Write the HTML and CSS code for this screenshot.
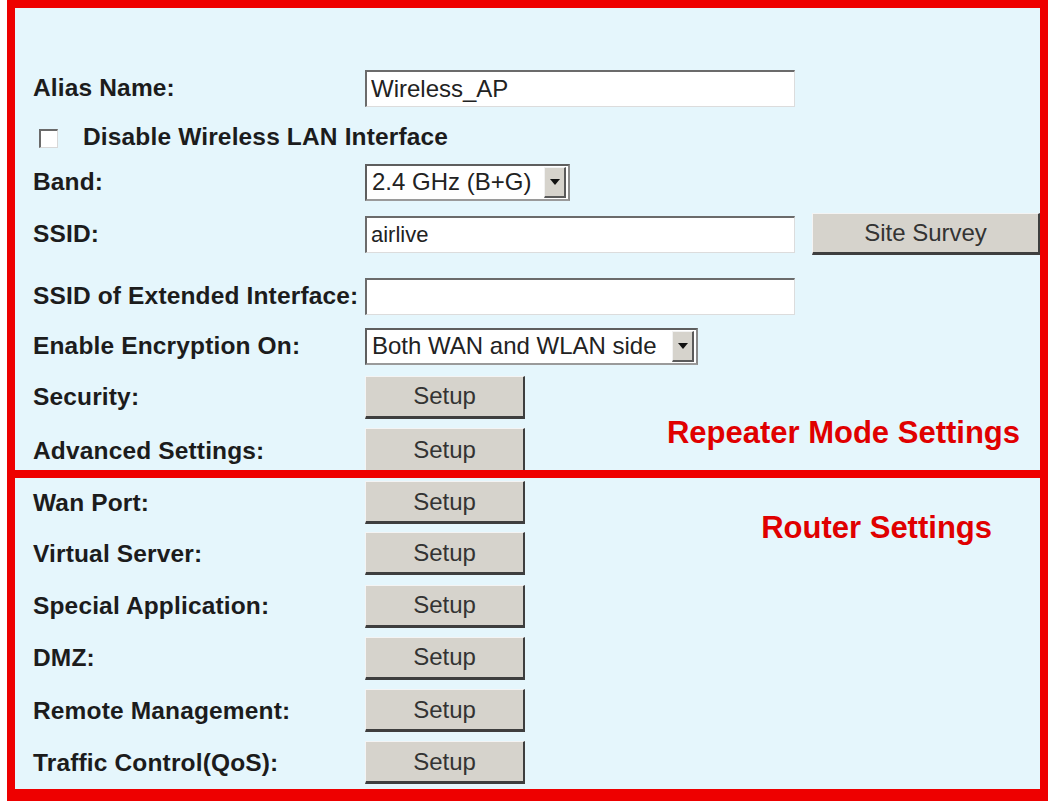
FILE: index.html
```html
<!DOCTYPE html>
<html>
<head>
<meta charset="utf-8">
<link rel="stylesheet" href="styles.css">
</head>
<body>
<div class="panel">
  <div class="box box-repeater">
    <div class="row row-alias">
      <span class="label">Alias Name:</span>
      <input class="field" type="text" value="Wireless_AP">
    </div>
    <div class="row row-check">
      <span class="checkbox"></span>
      <span class="label label-check">Disable Wireless LAN Interface</span>
    </div>
    <div class="row row-band">
      <span class="label">Band:</span>
      <div class="select select-band"><span class="select-text">2.4 GHz (B+G)</span><span class="arrow"><span class="tri"></span></span></div>
    </div>
    <div class="row row-ssid">
      <span class="label">SSID:</span>
      <input class="field field-small" type="text" value="airlive">
      <button class="btn btn-survey">Site Survey</button>
    </div>
    <div class="row row-ext">
      <span class="label">SSID of Extended Interface:</span>
      <input class="field" type="text" value="">
    </div>
    <div class="row row-enc">
      <span class="label">Enable Encryption On:</span>
      <div class="select select-enc"><span class="select-text">Both WAN and WLAN side</span><span class="arrow"><span class="tri"></span></span></div>
    </div>
    <div class="row row-sec">
      <span class="label">Security:</span>
      <button class="btn">Setup</button>
    </div>
    <div class="row row-adv">
      <span class="label">Advanced Settings:</span>
      <button class="btn">Setup</button>
    </div>
    <div class="note note-repeater">Repeater Mode Settings</div>
  </div>
  <div class="box box-router">
    <div class="row row-first">
      <span class="label">Wan Port:</span>
      <button class="btn">Setup</button>
    </div>
    <div class="row row-std">
      <span class="label">Virtual Server:</span>
      <button class="btn">Setup</button>
    </div>
    <div class="row row-std">
      <span class="label">Special Application:</span>
      <button class="btn">Setup</button>
    </div>
    <div class="row row-std">
      <span class="label">DMZ:</span>
      <button class="btn">Setup</button>
    </div>
    <div class="row row-std">
      <span class="label">Remote Management:</span>
      <button class="btn">Setup</button>
    </div>
    <div class="row row-std">
      <span class="label">Traffic Control(QoS):</span>
      <button class="btn">Setup</button>
    </div>
    <div class="note note-router">Router Settings</div>
  </div>
</div>
</body>
</html>
```

FILE: styles.css
```css
* { box-sizing: border-box; }

body {
  margin: 0;
  background: #ffffff;
  font-family: "Liberation Sans", Arial, sans-serif;
  color: #1c1c1c;
}

.panel {
  width: 1041px;
  margin-left: 7px;
}

.box {
  position: relative;
  background: #e5f6fc;
  border: 8px solid #ee0000;
}

.box-repeater {
  padding-top: 56px;
}

.box-router {
  border-top: 0;
  border-bottom-width: 12px;
}

.row {
  display: flex;
  align-items: center;
  padding-left: 18px;
}

.row-alias { height: 48px; }
.row-check { height: 50px; padding-left: 24px; }
.row-band { height: 40px; }
.row-ssid { height: 64px; }
.row-ext { height: 60px; }
.row-enc { height: 40px; }
.row-sec { height: 62px; }
.row-adv { height: 42px; align-items: flex-start; }
.row-adv .label { margin-top: 9px; }
.row-first { height: 49.9px; }
.row-std { height: 52.2px; }

.label {
  width: 332px;
  flex: none;
  font-weight: bold;
  font-size: 24.5px;
  letter-spacing: 0.15px;
  white-space: nowrap;
  color: #1c1c1c;
}

.label-check {
  width: auto;
  margin-left: 25px;
}

.checkbox {
  width: 19px;
  height: 19px;
  flex: none;
  background: #ffffff;
  border-style: solid;
  border-width: 2px 1px 1px 2px;
  border-color: #6a6a6a #d8d8d8 #d8d8d8 #6a6a6a;
  margin-top: 2px;
}

.field {
  width: 430px;
  height: 37px;
  flex: none;
  margin: 0;
  padding: 0 4px;
  background: #ffffff;
  border-style: solid;
  border-width: 2px 1px 1px 2px;
  border-color: #6b6b6b #dcdcdc #dcdcdc #6b6b6b;
  font-family: "Liberation Sans", Arial, sans-serif;
  font-size: 24px;
  color: #222222;
  outline: none;
}

.field-small {
  font-size: 22px;
}

.select {
  display: flex;
  align-items: center;
  height: 37px;
  flex: none;
  background: #ffffff;
  border-style: solid;
  border-width: 2px 2px 2px 2px;
  border-color: #5e5e5e #8a8a8a #9a9a9a #5e5e5e;
  padding-left: 5px;
  padding-right: 2px;
  font-size: 24px;
  color: #222222;
}

.select-band { width: 205px; }
.select-enc { width: 333px; }

.select-text {
  flex: 1;
  white-space: nowrap;
}

.arrow {
  width: 22px;
  height: 31px;
  flex: none;
  display: flex;
  align-items: center;
  justify-content: center;
  background: #d6d3cc;
  border-style: solid;
  border-width: 1px 2px 2px 1px;
  border-color: #f2f2f2 #5a5a5a #5a5a5a #f2f2f2;
}

.tri {
  width: 0;
  height: 0;
  border-left: 5px solid transparent;
  border-right: 5px solid transparent;
  border-top: 6px solid #111111;
}

.btn {
  width: 160px;
  height: 43px;
  flex: none;
  margin: 0;
  padding: 0;
  background: #d6d3cc;
  border-style: solid;
  border-width: 1px 2px 3px 1px;
  border-color: #f4f4f4 #3e3e3e #3e3e3e #f4f4f4;
  font-family: "Liberation Sans", Arial, sans-serif;
  font-size: 24px;
  color: #333333;
}

.row-adv .btn {
  height: 42px;
  border-bottom-width: 0;
}

.btn-survey {
  width: 228px;
  height: 42px;
  margin-left: 17px;
}

.note {
  position: absolute;
  font-weight: bold;
  font-size: 31px;
  line-height: 31px;
  color: #e00000;
  white-space: nowrap;
}

.note-repeater {
  top: 409px;
  right: 20px;
}

.note-router {
  top: 34px;
  right: 48px;
}
```
